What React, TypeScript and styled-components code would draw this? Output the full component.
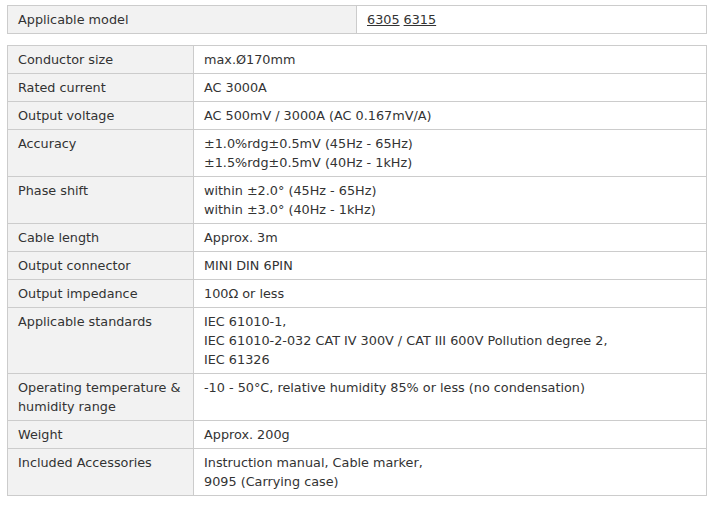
import React from "react";
import styled, { createGlobalStyle } from "styled-components";

const Global = createGlobalStyle`
  html, body { margin: 0; padding: 0; background: #fff; }
  body {
    font-family: Verdana, "DejaVu Sans", sans-serif;
    font-size: 12.8px;
    color: #333;
  }
`;

const Page = styled.div`
  padding: 5px 9px 0 7px;
  display: flex;
  flex-direction: column;
  gap: 11px;
`;

const Table = styled.table`
  width: 700px;
  border-collapse: collapse;
  table-layout: fixed;
`;

const Label = styled.th<{ $w?: number }>`
  width: ${(p) => (p.$w ? `${p.$w}px` : "auto")};
  background: #f2f2f2;
  border: 1px solid #cccccc;
  font-weight: normal;
  text-align: left;
  vertical-align: top;
  padding: 4px 10px 4px 10px;
  line-height: 19px;
`;

const Value = styled.td`
  border: 1px solid #cccccc;
  background: #fff;
  vertical-align: top;
  padding: 4px 10px 4px 10px;
  line-height: 19px;
`;

const ModelLink = styled.a`
  color: #333;
  text-decoration: underline;
  margin-right: 4px;
`;

const specs: [string, string[]][] = [
  ["Conductor size", ["max.Ø170mm"]],
  ["Rated current", ["AC 3000A"]],
  ["Output voltage", ["AC 500mV / 3000A (AC 0.167mV/A)"]],
  ["Accuracy", ["±1.0%rdg±0.5mV (45Hz - 65Hz)", "±1.5%rdg±0.5mV (40Hz - 1kHz)"]],
  ["Phase shift", ["within ±2.0° (45Hz - 65Hz)", "within ±3.0° (40Hz - 1kHz)"]],
  ["Cable length", ["Approx. 3m"]],
  ["Output connector", ["MINI DIN 6PIN"]],
  ["Output impedance", ["100Ω or less"]],
  [
    "Applicable standards",
    [
      "IEC 61010-1,",
      "IEC 61010-2-032 CAT IV 300V / CAT III 600V Pollution degree 2,",
      "IEC 61326",
    ],
  ],
  [
    "Operating temperature & humidity range",
    ["-10 - 50°C, relative humidity 85% or less (no condensation)", ""],
  ],
  ["Weight", ["Approx. 200g"]],
  ["Included Accessories", ["Instruction manual, Cable marker,", "9095 (Carrying case)"]],
];

export default function App() {
  return (
    <>
      <Global />
      <Page>
        <Table>
          <tbody>
            <tr>
              <Label $w={328}>Applicable model</Label>
              <Value>
                <ModelLink href="#">6305</ModelLink>
                <ModelLink href="#">6315</ModelLink>
              </Value>
            </tr>
          </tbody>
        </Table>
        <Table>
          <tbody>
            {specs.map(([k, v]) => (
              <tr key={k}>
                <Label $w={165}>{k}</Label>
                <Value>
                  {v.map((line, i) => (
                    <React.Fragment key={i}>
                      {i > 0 && <br />}
                      {line}
                    </React.Fragment>
                  ))}
                </Value>
              </tr>
            ))}
          </tbody>
        </Table>
      </Page>
    </>
  );
}
